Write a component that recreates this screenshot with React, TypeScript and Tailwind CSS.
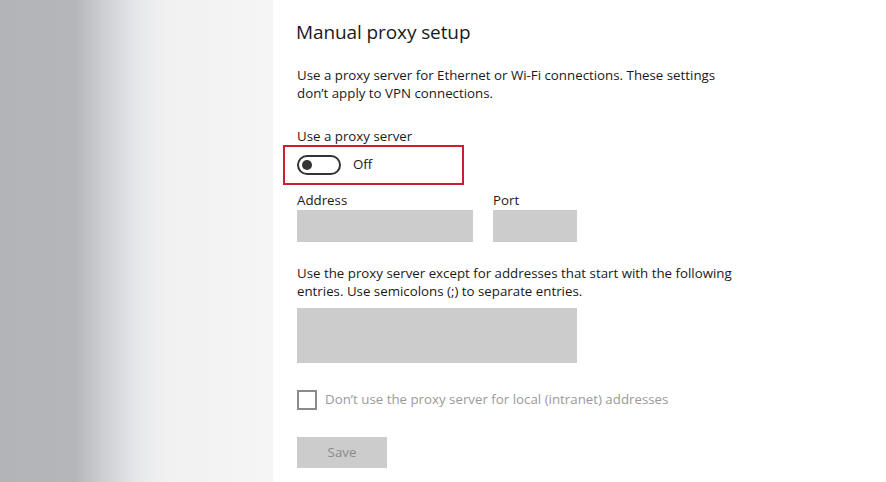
import React from "react"

const font = { fontFamily: '"Open Sans", "Noto Sans", sans-serif' }

function Toggle() {
  return (
    <div className="flex h-[20px] w-[44px] items-center rounded-full border-2 border-[#333] px-[3px]">
      <div className="h-[10px] w-[10px] rounded-full bg-[#333]" />
    </div>
  )
}

export default function App() {
  return (
    <div
      className="flex h-[482px] w-[886px] overflow-hidden text-[#1a1a1a]"
      style={font}
    >
      {/* Blurred side area */}
      <div className="h-full w-[273px] shrink-0 bg-[linear-gradient(to_right,#b3b4b8_0px,#b5b6ba_75px,#cfd0d3_105px,#e5e6e9_135px,#f1f1f2_165px,#f5f5f5_273px)]" />

      {/* Settings panel */}
      <div className="flex-1 bg-white pl-[24px] pt-[18px]">
        <h1 className="-ml-[1px] text-[19px] leading-[28px] tracking-[-0.1px]">Manual proxy setup</h1>

        <p className="mt-[20px] w-[440px] text-[13.3px] leading-[18px]">
          Use a proxy server for Ethernet or Wi-Fi connections. These settings
          don’t apply to VPN connections.
        </p>

        <div className="mt-[25px] text-[13.3px] leading-[19px]">Use a proxy server</div>

        <div className="-ml-[14px] -mt-[1px] flex h-[40px] w-[181px] items-center border-2 border-[#c8202f] pl-[12px]">
          <Toggle />
          <span className="ml-[12px] text-[13.3px]">Off</span>
        </div>

        <div className="mt-[6px] flex gap-[20px]">
          <div>
            <div className="text-[13.3px] leading-[19px]">Address</div>
            <div className="h-[32px] w-[176px] bg-[#cccccc]" />
          </div>
          <div>
            <div className="text-[13.3px] leading-[19px]">Port</div>
            <div className="h-[32px] w-[84px] bg-[#cccccc]" />
          </div>
        </div>

        <p className="mt-[22px] w-[440px] text-[13.3px] leading-[18px]">
          Use the proxy server except for addresses that start with the following
          entries. Use semicolons (;) to separate entries.
        </p>

        <div className="mt-[8px] h-[55px] w-[280px] bg-[#cccccc]" />

        <div className="mt-[27px] flex items-center">
          <div className="h-[20px] w-[20px] border-2 border-[#8a8a8a]" />
          <span className="ml-[8px] text-[13.3px] text-[#9a9a9a]">
            Don’t use the proxy server for local (intranet) addresses
          </span>
        </div>

        <button className="mt-[27px] h-[31px] w-[90px] bg-[#cccccc] text-[13.3px] text-[#8a8a8a]">
          Save
        </button>
      </div>
    </div>
  )
}
